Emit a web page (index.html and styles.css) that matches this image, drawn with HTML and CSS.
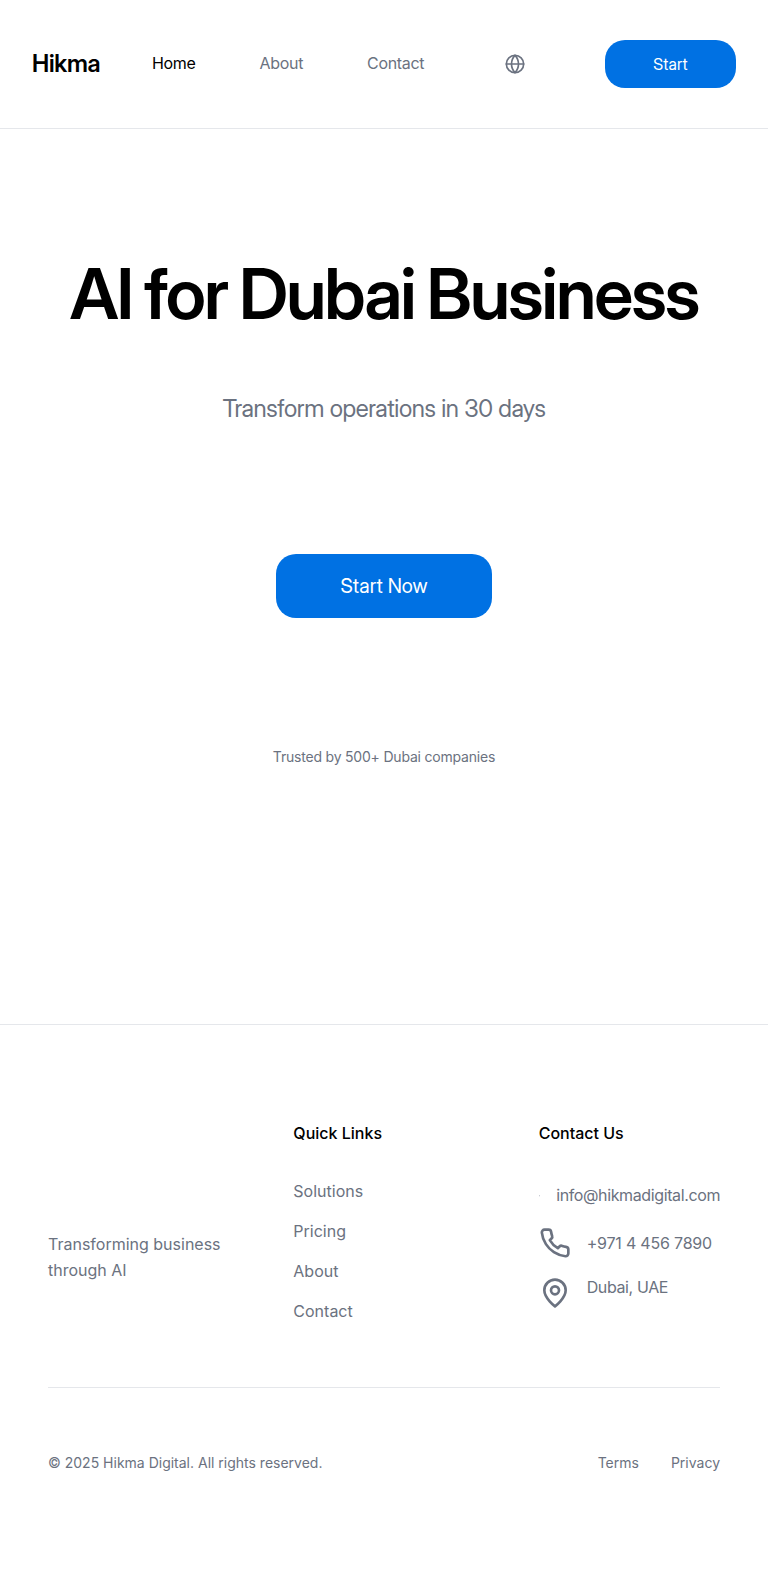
FILE: index.html
```html
<!DOCTYPE html>
<html lang="en">
<head>
<meta charset="utf-8">
<title>Hikma</title>
<link rel="stylesheet" href="styles.css">
</head>
<body>
<header class="header">
  <a class="brand">Hikma</a>
  <nav class="nav"><a class="active">Home</a><a>About</a><a>Contact</a></nav>
  <button class="lang" aria-label="Language"><svg width="20" height="20" viewBox="0 0 24 24"><circle cx="12" cy="12" r="10.4"/><path d="M12 1.6a15 15 0 0 0 0 20.8 15 15 0 0 0 0-20.8"/><path d="M1.6 12h20.8"/></svg></button>
  <a class="btn">Start</a>
</header>
<main class="hero">
  <h1>AI for Dubai Business</h1>
  <p class="lead">Transform operations in 30 days</p>
  <a class="btn btn-large">Start Now</a>
  <p class="trust">Trusted by 500+ Dubai companies</p>
</main>
<footer class="footer">
  <div class="columns">
    <p class="about">Transforming business through AI</p>
    <section><h2>Quick Links</h2>
      <ul class="links"><li>Solutions</li><li>Pricing</li><li>About</li><li>Contact</li></ul>
    </section>
    <section><h2>Contact Us</h2>
      <ul class="contact">
        <li class="mail"><svg class="tiny" viewBox="0 0 24 24"><rect width="20" height="16" x="2" y="4" rx="2"/><path d="m22 7-8.97 5.7a1.94 1.94 0 0 1-2.06 0L2 7"/></svg><span>info@hikmadigital.com</span></li>
        <li class="phone"><svg width="32" height="32" viewBox="0 0 24 24"><path d="M22 16.92v3a2 2 0 0 1-2.18 2 19.79 19.79 0 0 1-8.63-3.07 19.5 19.5 0 0 1-6-6 19.79 19.79 0 0 1-3.07-8.67A2 2 0 0 1 4.11 2h3a2 2 0 0 1 2 1.72 12.84 12.84 0 0 0 .7 2.81 2 2 0 0 1-.45 2.11L8.09 9.91a16 16 0 0 0 6 6l1.27-1.27a2 2 0 0 1 2.11-.45 12.84 12.84 0 0 0 2.81.7A2 2 0 0 1 22 16.92z"/></svg><span>+971 4 456 7890</span></li>
        <li class="place"><svg width="32" height="32" viewBox="0 0 24 24"><path d="M20 10c0 6-8 12-8 12s-8-6-8-12a8 8 0 0 1 16 0Z"/><circle cx="12" cy="10" r="3"/></svg><span>Dubai, UAE</span></li>
      </ul>
    </section>
  </div>
  <div class="legal"><span>© 2025 Hikma Digital. All rights reserved.</span><nav><a>Terms</a><a>Privacy</a></nav></div>
</footer>
</body>
</html>
```
FILE: styles.css
```css
* { box-sizing: border-box; margin: 0; padding: 0; }
body { font: 400 16px/1.6 Inter, sans-serif; color: #6b7280; background: #fff; }
ul { list-style: none; }
svg { fill: none; stroke: currentColor; stroke-width: 2; stroke-linecap: round; stroke-linejoin: round; flex-shrink: 0; display: block; }
.header { height: 129px; padding: 0 32px; display: flex; align-items: center; border-bottom: 1px solid #e5e7eb; }
.brand, h1, .lead, .btn { font-family: "Inter Display", Inter, sans-serif; }
.brand { font-size: 24px; font-weight: 600; letter-spacing: -0.24px; color: #000; width: 120px; }
.nav { display: flex; gap: 64px; letter-spacing: -0.32px; }
.nav .active { color: #000; }
.lang { border: 0; background: none; color: inherit; margin-left: 80px; padding-left: 1px; }
.btn { background: #0071e3; color: #fff; border-radius: 20px; height: 48px; padding-top: 1px; display: flex; align-items: center; justify-content: center; white-space: nowrap; }
.header .btn { margin-left: auto; width: 131px; letter-spacing: 0.16px; }
.hero { height: 895px; padding-top: 129px; display: flex; flex-direction: column; align-items: center; }
h1 { font-size: 70.5px; line-height: 72px; font-weight: 600; letter-spacing: -2.05px; word-spacing: -2px; color: #000; }
.lead { font-size: 24px; line-height: 36px; letter-spacing: -0.36px; margin-top: 61px; }
.hero .btn-large { height: 64px; width: 216px; padding: 0; font-size: 20px; margin-top: 127px; line-height: 30px; }
.trust { font-size: 14px; line-height: 20px; margin-top: 129px; letter-spacing: -0.2px; }
.footer { height: 546px; border-top: 1px solid #e5e7eb; padding: 96px 48px 0; }
.columns { display: grid; grid-template-columns: repeat(3, minmax(0, 1fr)); gap: 64px; height: 266px; }
.about { padding-top: 111px; }
h2 { font-size: 16px; line-height: 24px; font-weight: 500; color: #000; }
.links { padding-top: 34px; display: grid; gap: 14.4px; }
.contact { padding-top: 34px; letter-spacing: -0.38px; }
.contact li { display: flex; gap: 16px; align-items: center; }
.tiny { width: 1.5px; height: 1.5px; }
.mail { height: 34px; }
.phone { height: 32px; margin-top: 14px; }
.phone span { padding-top: 1px; letter-spacing: -0.2px; }
.contact .place { margin-top: 16px; align-items: flex-start; }
.place svg { margin-top: 2px; }
.legal { border-top: 1px solid #e5e7eb; padding-top: 63px; display: flex; justify-content: space-between; font-size: 14px; line-height: 24px; }
.legal nav { display: flex; gap: 32px; }
```
